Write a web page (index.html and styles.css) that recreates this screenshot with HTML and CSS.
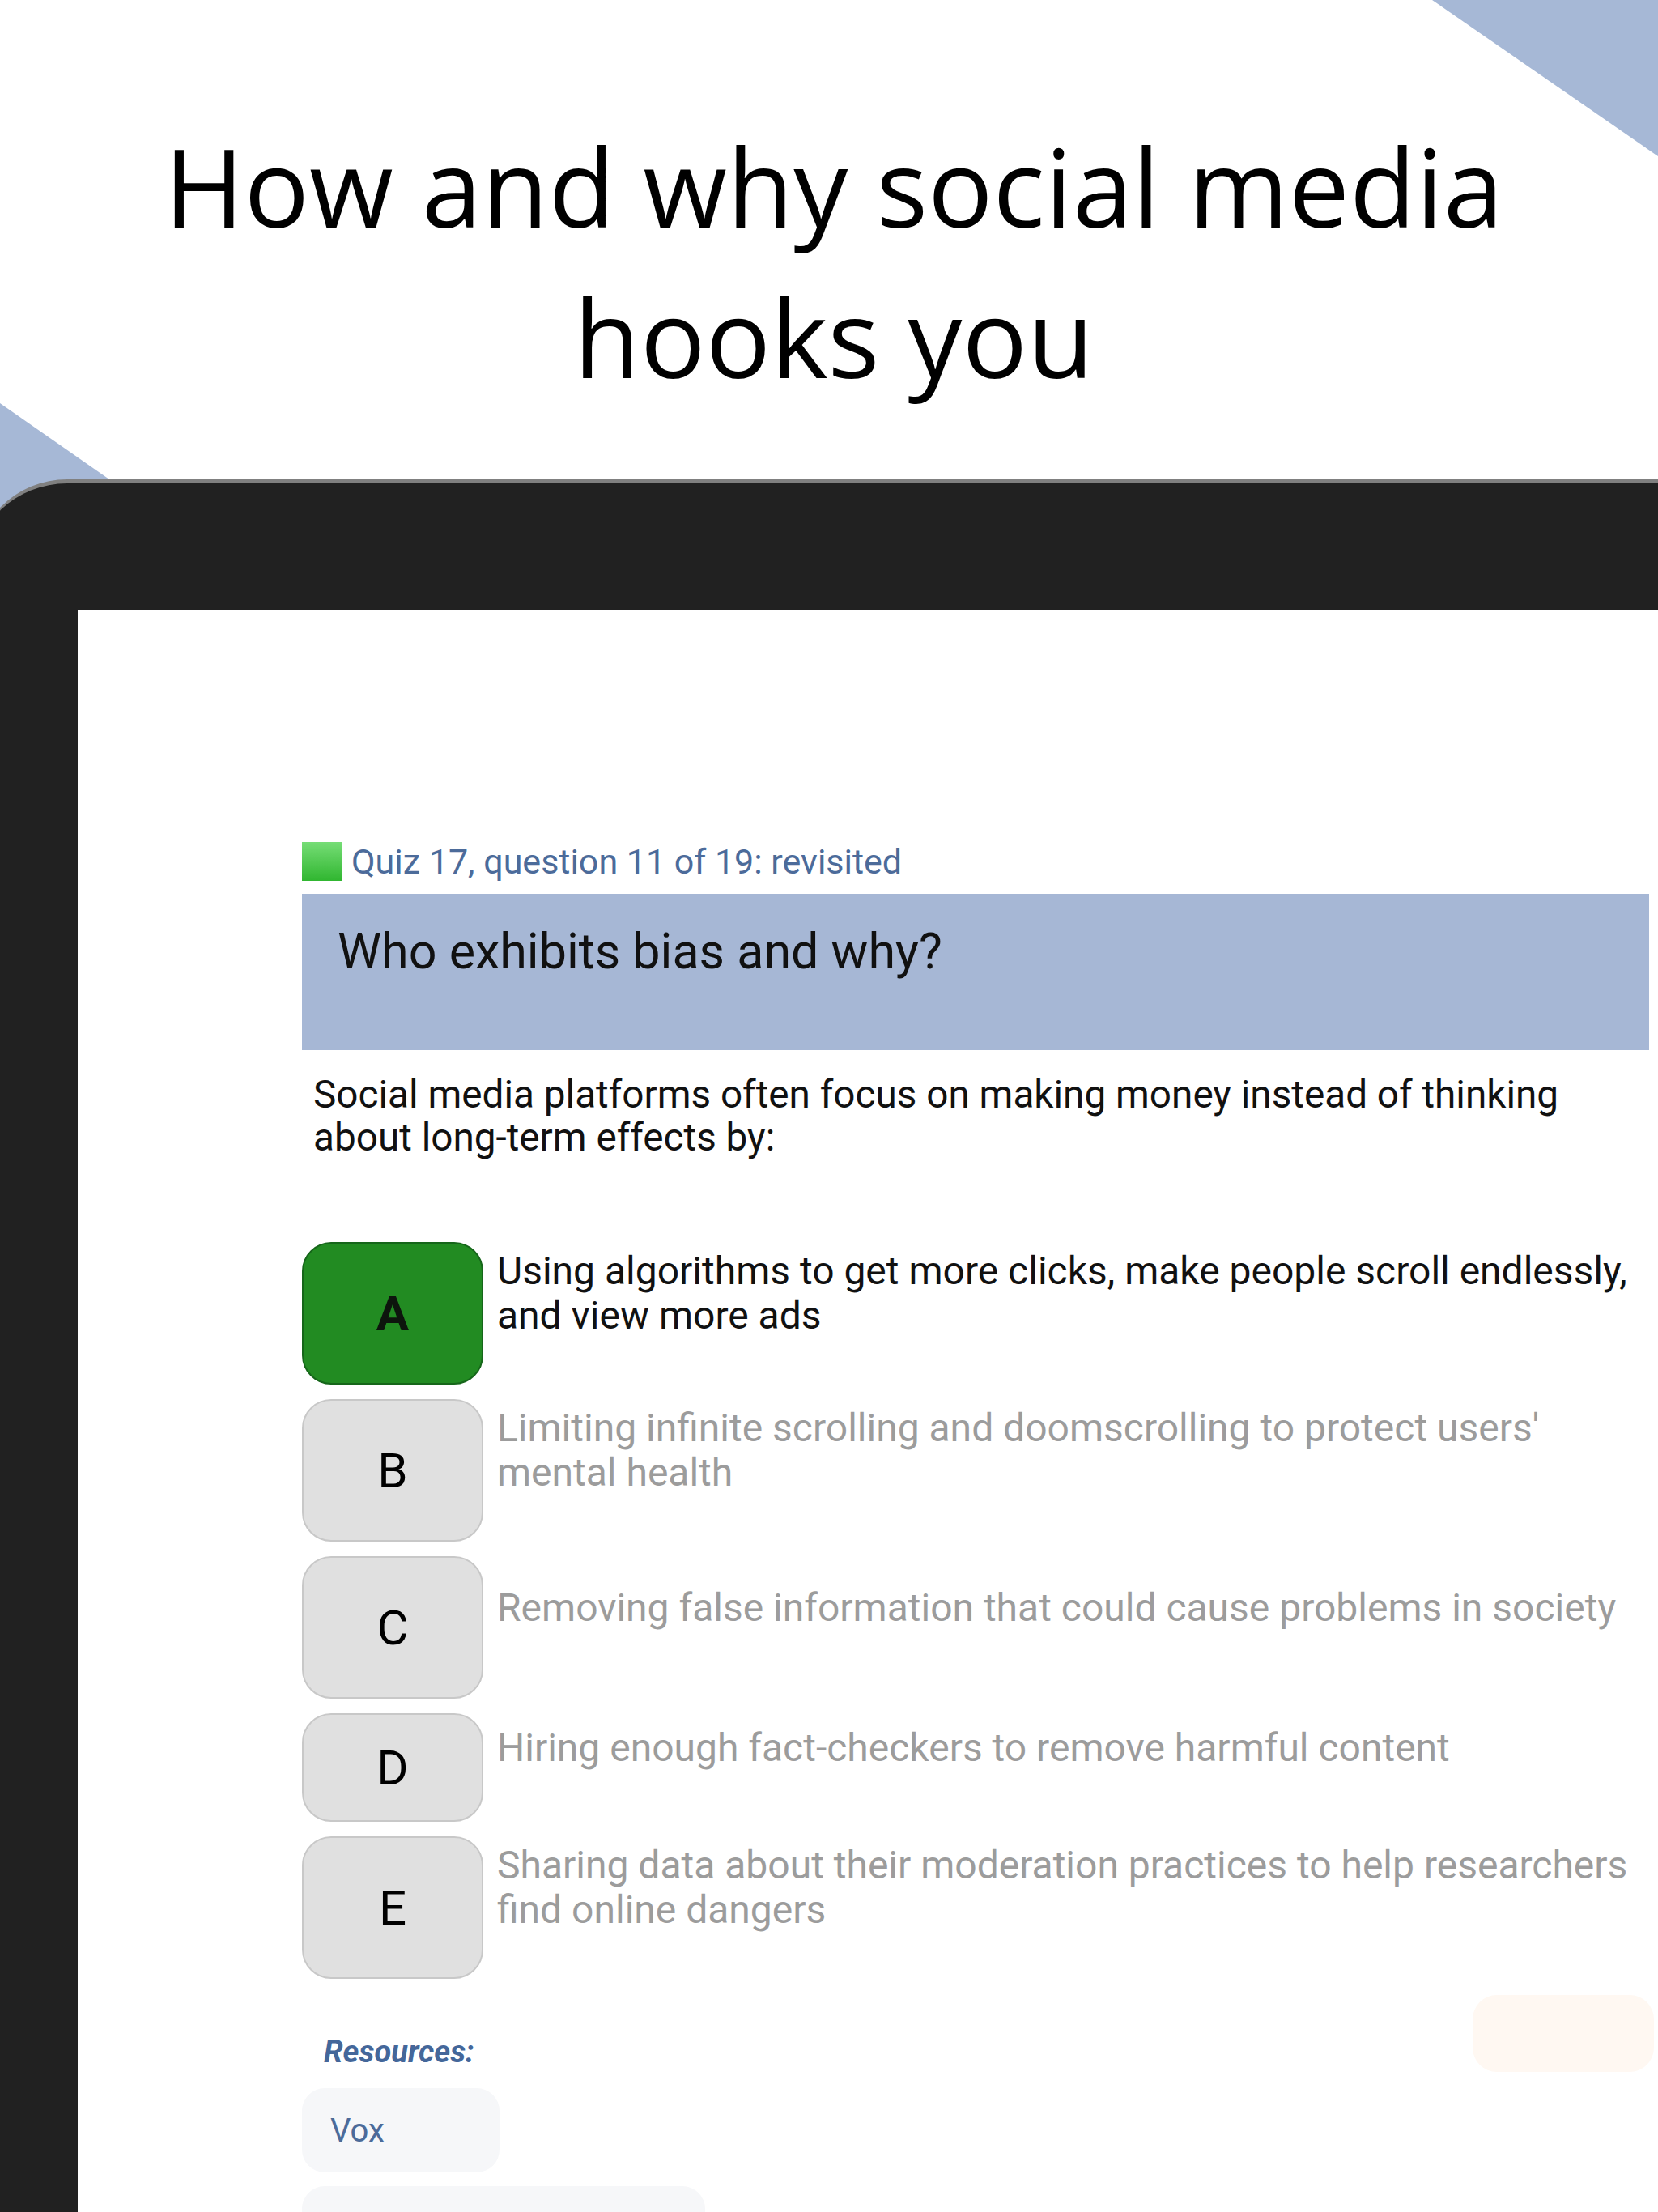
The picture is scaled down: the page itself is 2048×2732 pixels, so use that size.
FILE: index.html
```html
<!DOCTYPE html>
<html lang="en">
<head>
<meta charset="utf-8">
<title>How and why social media hooks you</title>
<link rel="stylesheet" href="styles.css">
</head>
<body>
<div class="slide">
  <svg class="corner corner-tr" viewBox="0 0 279 193" aria-hidden="true"><polygon points="0,0 279,0 279,193"/></svg>
  <svg class="corner corner-bl" viewBox="0 0 600 420" aria-hidden="true"><polygon points="0,0 603,420 0,420"/></svg>

  <h1 class="title">How and why social media<br>hooks you</h1>

  <div class="tablet">
    <div class="screen">
      <div class="screen-body">
        <div class="quiz-meta">
          <span class="status-square"></span>
          <span class="quiz-label">Quiz 17, question 11 of 19: revisited</span>
        </div>

        <div class="question-banner">
          <h2 class="question">Who exhibits bias and why?</h2>
        </div>

        <p class="prompt">Social media platforms often focus on making money instead of thinking about long-term effects by:</p>

        <ol class="options">
          <li class="option is-correct">
            <span class="option-key">A</span>
            <span class="option-text">Using algorithms to get more clicks, make people scroll endlessly, and view more ads</span>
          </li>
          <li class="option">
            <span class="option-key">B</span>
            <span class="option-text">Limiting infinite scrolling and doomscrolling to protect users' mental health</span>
          </li>
          <li class="option">
            <span class="option-key">C</span>
            <span class="option-text">Removing false information that could cause problems in society</span>
          </li>
          <li class="option option-short">
            <span class="option-key">D</span>
            <span class="option-text">Hiring enough fact-checkers to remove harmful content</span>
          </li>
          <li class="option">
            <span class="option-key">E</span>
            <span class="option-text">Sharing data about their moderation practices to help researchers find online dangers</span>
          </li>
        </ol>

        <div class="resources-head">
          <span class="resources-label">Resources:</span>
          <span class="next-button" aria-hidden="true"></span>
        </div>

        <div class="resources">
          <span class="resource">Vox</span>
          <span class="resource resource-wide" aria-hidden="true"></span>
        </div>
      </div>
    </div>
  </div>
</div>
</body>
</html>
```

FILE: styles.css
```css
html, body {
  margin: 0;
  padding: 0;
}

body {
  width: 2048px;
  height: 2732px;
  overflow: hidden;
  background: #ffffff;
  font-family: Roboto, "Noto Sans", "Liberation Sans", sans-serif;
}

.slide {
  position: relative;
  width: 2048px;
  height: 2732px;
  overflow: hidden;
  background: #ffffff;
}

/* decorative corner wedges behind the slide content */
.corner {
  position: absolute;
  fill: #a6b8d6;
  z-index: 0;
}

.corner-tr {
  top: 0;
  right: 0;
  width: 279px;
  height: 193px;
}

.corner-bl {
  left: 0;
  top: 498px;
  width: 600px;
  height: 420px;
}

.title {
  position: relative;
  z-index: 1;
  margin: 0;
  padding: 136px 0 0 12px;
  font-family: "Open Sans", "Noto Sans", sans-serif;
  font-weight: 400;
  font-size: 134px;
  line-height: 186px;
  text-align: center;
  color: #000000;
}

/* tablet frame */
.tablet {
  position: relative;
  z-index: 2;
  box-sizing: border-box;
  width: 2200px;
  height: 2140px;
  margin: 84px 0 0 -33px;
  padding: 156px 0 0 129px;
  background: #212121;
  border-top: 5px solid #808080;
  border-radius: 116px 116px 0 0;
}

.screen {
  box-sizing: border-box;
  height: 100%;
  padding: 286px 0 0 277px;
  background: #ffffff;
}

.screen-body {
  width: 1664px;
}

/* quiz header */
.quiz-meta {
  display: flex;
  align-items: center;
  gap: 11px;
}

.status-square {
  width: 50px;
  height: 48px;
  background: linear-gradient(#76dd76, #30b630);
}

.quiz-label {
  font-size: 43px;
  line-height: 50px;
  color: #4c6b9a;
}

.question-banner {
  box-sizing: border-box;
  height: 193px;
  margin-top: 15px;
  padding: 35px 44px 0;
  background: #a6b7d5;
}

.question {
  margin: 0;
  font-size: 61px;
  font-weight: 400;
  line-height: 72px;
  color: #111111;
}

.prompt {
  margin: 29px 0 0;
  padding: 0 14px;
  font-size: 47.7px;
  line-height: 53px;
  color: #111111;
}

/* answer list */
.options {
  list-style: none;
  margin: 102px 0 0;
  padding: 0;
  display: flex;
  flex-direction: column;
  gap: 18px;
}

.option {
  display: flex;
  align-items: center;
  gap: 17px;
}

.option-key {
  box-sizing: border-box;
  flex: 0 0 224px;
  height: 176px;
  display: flex;
  align-items: center;
  justify-content: center;
  border-radius: 36px;
  background: #e0e0e0;
  border: 2px solid #c8c8c8;
  font-size: 60px;
  color: #000000;
}

.option-short .option-key {
  height: 134px;
}

.option-text {
  flex: 1;
  padding-bottom: 50px;
  font-size: 48px;
  line-height: 55px;
  color: #9c9c9c;
}

.is-correct .option-key {
  background: #228b22;
  border-color: #16661a;
  font-weight: 700;
  color: #0d150d;
}

.is-correct .option-text {
  color: #111111;
}

/* resources */
.resources-head {
  display: flex;
  justify-content: space-between;
  align-items: flex-end;
  margin-top: 20px;
}

.resources-label {
  padding: 0 0 3px 27px;
  font-size: 38px;
  line-height: 44px;
  font-weight: 700;
  font-style: italic;
  color: #44679a;
}

.next-button {
  width: 224px;
  height: 95px;
  margin-right: -6px;
  border-radius: 30px;
  background: #fff8f2;
}

.resources {
  display: flex;
  flex-direction: column;
  align-items: flex-start;
  gap: 17px;
  margin-top: 20px;
}

.resource {
  box-sizing: border-box;
  width: 244px;
  height: 104px;
  display: flex;
  align-items: center;
  padding-left: 35px;
  border-radius: 28px;
  background: #f6f7f9;
  font-size: 40px;
  color: #4c6b9a;
}

.resource-wide {
  width: 498px;
}
```
